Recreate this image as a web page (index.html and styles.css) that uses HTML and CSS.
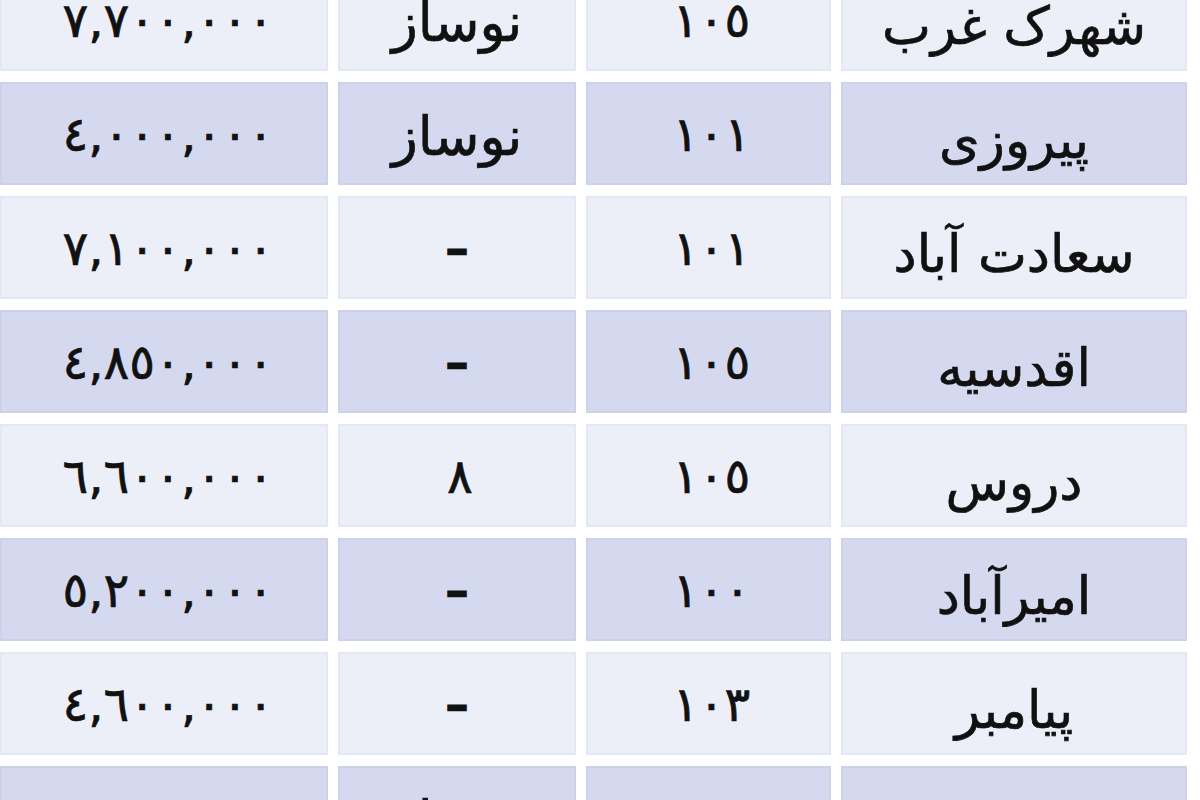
FILE: index.html
```html
<!DOCTYPE html>
<html lang="fa">
<head>
<meta charset="utf-8">
<title>قیمت مسکن</title>
<link rel="stylesheet" href="styles.css">
</head>
<body>
<div class="table" dir="rtl">
  <div class="row light"><div class="cell name">شهرک غرب</div><div class="cell num">١٠٥</div><div class="cell word">نوساز</div><div class="cell num price">٧,٧٠٠,٠٠٠</div></div>
  <div class="row dark"><div class="cell name">پیروزی</div><div class="cell num">١٠١</div><div class="cell word">نوساز</div><div class="cell num price">٤,٠٠٠,٠٠٠</div></div>
  <div class="row light"><div class="cell name">سعادت آباد</div><div class="cell num">١٠١</div><div class="cell"><span class="dash">–</span></div><div class="cell num price">٧,١٠٠,٠٠٠</div></div>
  <div class="row dark"><div class="cell name">اقدسیه</div><div class="cell num">١٠٥</div><div class="cell"><span class="dash">–</span></div><div class="cell num price">٤,٨٥٠,٠٠٠</div></div>
  <div class="row light"><div class="cell name">دروس</div><div class="cell num">١٠٥</div><div class="cell num">٨</div><div class="cell num price">٦,٦٠٠,٠٠٠</div></div>
  <div class="row dark"><div class="cell name">امیرآباد</div><div class="cell num">١٠٠</div><div class="cell"><span class="dash">–</span></div><div class="cell num price">٥,٢٠٠,٠٠٠</div></div>
  <div class="row light"><div class="cell name">پیامبر</div><div class="cell num">١٠٣</div><div class="cell"><span class="dash">–</span></div><div class="cell num price">٤,٦٠٠,٠٠٠</div></div>
  <div class="row dark"><div class="cell name">ونک</div><div class="cell num">١٠٠</div><div class="cell word">نوساز</div><div class="cell num price">٧,٠٠٠,٠٠٠</div></div>
</div>
</body>
</html>
```

FILE: styles.css
```css
html, body {
  margin: 0;
  padding: 0;
  background: #ffffff;
  overflow: hidden;
}

.table {
  width: 1187px;
  margin-top: -32px;
  display: grid;
  row-gap: 11px;
  font-family: "DejaVu Sans", sans-serif;
  font-size: 48px;
  color: #111111;
  -webkit-text-stroke: 0.7px #111111;
}

.row {
  display: grid;
  grid-template-columns: 346px 245px 238px 328px;
  column-gap: 10px;
  height: 103px;
}

.cell {
  display: flex;
  align-items: center;
  justify-content: center;
  box-sizing: border-box;
  border: 2px solid transparent;
}

.light .cell {
  background: #eceef8;
  border-color: #e4e7f4;
}

.dark .cell {
  background: #d5d9ef;
  border-color: #cdd2ea;
}

.name {
  font-size: 52px;
  padding-top: 12px;
}

.word {
  font-size: 54px;
  padding-top: 6px;
}

.num {
  letter-spacing: 6px;
  text-indent: -6px;
}

.price {
  letter-spacing: 9px;
  padding-left: 2px;
}

.dash {
  font-weight: bold;
}
```
